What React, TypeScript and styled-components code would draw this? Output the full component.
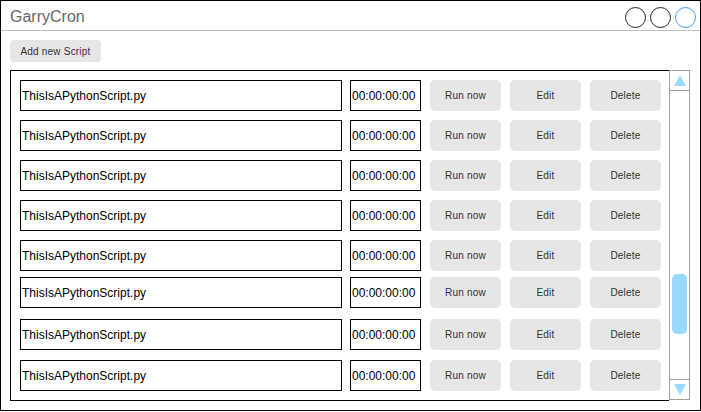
import React from 'react';
import styled, { createGlobalStyle } from 'styled-components';

const GlobalStyle = createGlobalStyle`
  html, body {
    margin: 0;
    padding: 0;
    background: #fff;
  }
  body {
    font-family: "Liberation Sans", Arial, sans-serif;
  }
  * {
    box-sizing: border-box;
  }
`;

const Frame = styled.div`
  width: 701px;
  height: 411px;
  border: 1px solid #000;
  display: flex;
  flex-direction: column;
`;

const Header = styled.div`
  height: 30px;
  border-bottom: 1px solid #c0c0c0;
  display: flex;
  align-items: center;
  justify-content: space-between;
  padding: 0 4px 0 9px;
`;

const Title = styled.h1`
  margin: 0;
  font-size: 16px;
  font-weight: normal;
  color: #666;
  padding-top: 2px;
`;

const WindowButtons = styled.div`
  display: flex;
  gap: 4px;
  padding-top: 3px;
`;

const Circle = styled.span<{ $active?: boolean }>`
  width: 21px;
  height: 21px;
  border-radius: 50%;
  border: 1px solid ${({ $active }) => ($active ? '#3d9bff' : '#222')};
`;

const Toolbar = styled.div`
  padding: 9px 9px 8px;
  display: flex;
`;

const GrayButton = styled.button<{ $w?: number }>`
  width: ${({ $w }) => $w ?? 71}px;
  height: 31px;
  border: none;
  border-radius: 5px;
  background: #e6e6e6;
  color: #333;
  font-family: "Liberation Sans", Arial, sans-serif;
  font-size: 10px;
  letter-spacing: 0.2px;
  padding: 0;
  flex-shrink: 0;
`;

const AddButton = styled(GrayButton)`
  height: 22px;
  border-radius: 4px;
`;

const Panel = styled.div`
  margin-left: 9px;
  display: flex;
  width: 680px;
  height: 331px;
`;

const List = styled.div`
  width: 660px;
  height: 331px;
  border: 1px solid #000;
  border-right: none;
  padding: 9px 0 0 9px;
  display: flex;
  flex-direction: column;
`;

const Row = styled.div<{ $gap: number }>`
  display: flex;
  align-items: center;
  gap: 9px;
  margin-top: ${({ $gap }) => $gap}px;
`;

const Field = styled.div<{ $w: number }>`
  width: ${({ $w }) => $w}px;
  height: 31px;
  border: 1px solid #000;
  display: flex;
  align-items: center;
  padding-left: 1px;
  font-size: 12px;
  color: #000;
  flex-shrink: 0;
`;

const NameField = styled(Field)`
  margin-right: -1px;
`;

const ScrollBar = styled.div`
  width: 21px;
  height: 330px;
  border: 1px solid #a0a0a0;
  display: flex;
  flex-direction: column;
`;

const ArrowBox = styled.div<{ $bottom?: boolean }>`
  height: 20px;
  display: flex;
  align-items: center;
  justify-content: center;
  ${({ $bottom }) => ($bottom ? 'border-top: 1px solid #a0a0a0;' : 'border-bottom: 1px solid #a0a0a0;')}
`;

const Track = styled.div`
  flex: 1;
  padding: 183px 1px 0 2px;
`;

const Thumb = styled.div`
  width: 15px;
  height: 60px;
  border-radius: 5px;
  background: #99d9ff;
`;

const Arrow = ({ down }: { down?: boolean }) => (
  <svg width="12" height="11" viewBox="0 0 12 11">
    <polygon
      points={down ? '0,0 12,0 6,11' : '6,0 12,11 0,11'}
      fill="#99d9ff"
    />
  </svg>
);

const rowGaps = [0, 9, 9, 9, 9, 6, 11, 10];

const App: React.FC = () => {
  return (
    <>
      <GlobalStyle />
      <Frame>
        <Header>
          <Title>GarryCron</Title>
          <WindowButtons>
            <Circle />
            <Circle />
            <Circle $active />
          </WindowButtons>
        </Header>
        <Toolbar>
          <AddButton $w={91}>Add new Script</AddButton>
        </Toolbar>
        <Panel>
          <List>
            {rowGaps.map((gap, i) => (
              <Row key={i} $gap={gap}>
                <NameField $w={322}>ThisIsAPythonScript.py</NameField>
                <Field $w={71}>00:00:00:00</Field>
                <GrayButton>Run now</GrayButton>
                <GrayButton>Edit</GrayButton>
                <GrayButton>Delete</GrayButton>
              </Row>
            ))}
          </List>
          <ScrollBar>
            <ArrowBox>
              <Arrow />
            </ArrowBox>
            <Track>
              <Thumb />
            </Track>
            <ArrowBox $bottom>
              <Arrow down />
            </ArrowBox>
          </ScrollBar>
        </Panel>
      </Frame>
    </>
  );
};

export default App;
